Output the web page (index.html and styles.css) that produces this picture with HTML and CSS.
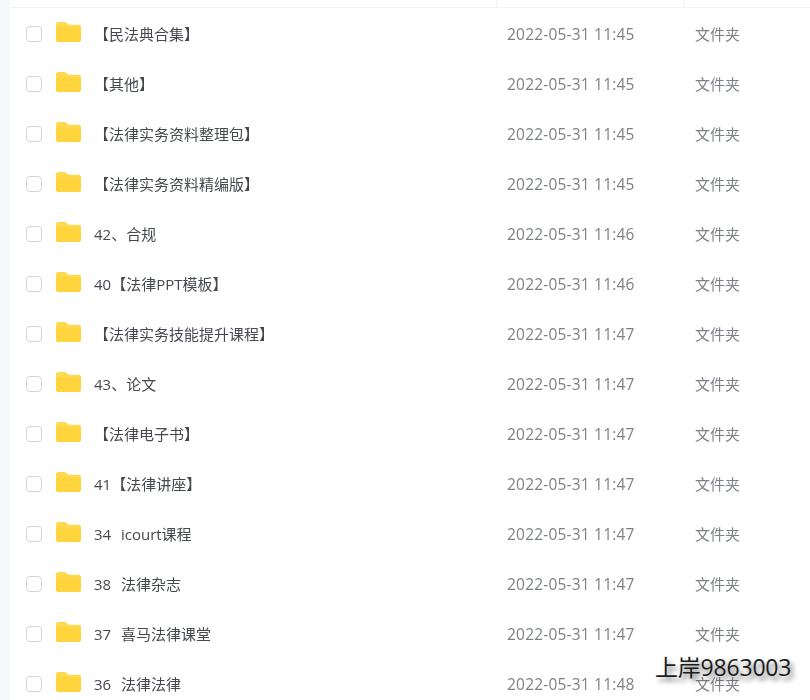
FILE: index.html
```html
<!DOCTYPE html>
<html lang="zh-CN">
<head>
    <meta charset="UTF-8">
    <title>文件列表</title>
    <link rel="stylesheet" href="styles.css">
</head>
<body>
    <div class="file-panel">
        <div class="list-head">
            <span class="head-name"></span>
            <span class="head-date"></span>
            <span class="head-type"></span>
        </div>
        <div class="file-list" id="fileList"></div>
    </div>
    <div class="watermark">上岸9863003</div>

    <template id="rowTemplate">
        <div class="file-row">
            <span class="check"></span>
            <svg class="folder" viewBox="0 0 25 20" width="25" height="20">
                <path d="M0 2.2C0 1 .9 0 2.1 0h6.6c.7 0 1.3.3 1.8.8l1.9 2h10.4c1.2 0 2.2 1 2.2 2.2v12.8c0 1.200-1 2.200-2.200 2.200H2.200C1 20 0 19 0 17.800z" fill="#ffd94f"/>
                <path d="M0 5.500h25v12.300c0 1.200-1 2.200-2.200 2.200H2.200C1 20 0 19 0 17.800z" fill="#ffd43c"/>
            </svg>
            <span class="name"></span>
            <span class="date"></span>
            <span class="type">文件夹</span>
        </div>
    </template>

    <script>
        // name, date for each row
        const files = [
            ['【民法典合集】', '2022-05-31 11:45'],
            ['【其他】', '2022-05-31 11:45'],
            ['【法律实务资料整理包】', '2022-05-31 11:45'],
            ['【法律实务资料精编版】', '2022-05-31 11:45'],
            ['42、合规', '2022-05-31 11:46'],
            ['40【法律PPT模板】', '2022-05-31 11:46'],
            ['【法律实务技能提升课程】', '2022-05-31 11:47'],
            ['43、论文', '2022-05-31 11:47'],
            ['【法律电子书】', '2022-05-31 11:47'],
            ['41【法律讲座】', '2022-05-31 11:47'],
            ['34&nbsp;&nbsp;icourt课程', '2022-05-31 11:47'],
            ['38&nbsp;&nbsp;法律杂志', '2022-05-31 11:47'],
            ['37&nbsp;&nbsp;喜马法律课堂', '2022-05-31 11:47'],
            ['36&nbsp;&nbsp;法律法律', '2022-05-31 11:48']
        ];

        const list = document.getElementById('fileList');
        const tpl = document.getElementById('rowTemplate');
        files.forEach(file => {
            const row = tpl.content.cloneNode(true);
            row.querySelector('.name').innerHTML = file[0];
            row.querySelector('.date').textContent = file[1];
            list.appendChild(row);
        });
    </script>
</body>
</html>
```

FILE: styles.css
```css
html, body {
    margin: 0;
    height: 700px;
    overflow: hidden;
    background: #fff;
}
body {
    font-family: "Open Sans", "Noto Sans CJK SC", sans-serif;
    font-size: 15px;
    position: relative;
    background: #f7f9fa;
}
.file-panel {
    margin-left: 10px;
    height: 700px;
    background: #fff;
    overflow: hidden;
    filter: blur(0.35px);
}
.list-head {
    display: grid;
    grid-template-columns: 487px 187px 1fr;
    height: 7px;
    border-bottom: 1px solid #f2f3f4;
}
.head-name, .head-date {
    border-right: 1px solid #f2f3f4;
}
.file-row {
    display: flex;
    align-items: center;
    height: 50px;
}
.check {
    box-sizing: border-box;
    width: 16px;
    height: 16px;
    margin: 1px 0 0 16px;
    border: 1px solid #d2d5d8;
    border-radius: 4px;
    background: #fff;
}
.folder {
    margin-left: 14px;
    margin-top: -3px;
}
.name {
    width: 413px;
    margin-left: 13px;
    word-spacing: 1px;
    color: #45484e;
}
.date {
    width: 188px;
    margin-top: 1px;
    font-size: 15.5px;
    letter-spacing: 0.2px;
    color: #7d8086;
}
.type {
    color: #7d8086;
}
.watermark {
    position: absolute;
    left: 655px;
    top: 651px;
    font-size: 23px;
    letter-spacing: -0.2px;
    line-height: 32px;
    white-space: nowrap;
    color: #1c1c1c;
    text-shadow: 3px 4px 5px rgba(0, 0, 0, 0.55);
}
```
